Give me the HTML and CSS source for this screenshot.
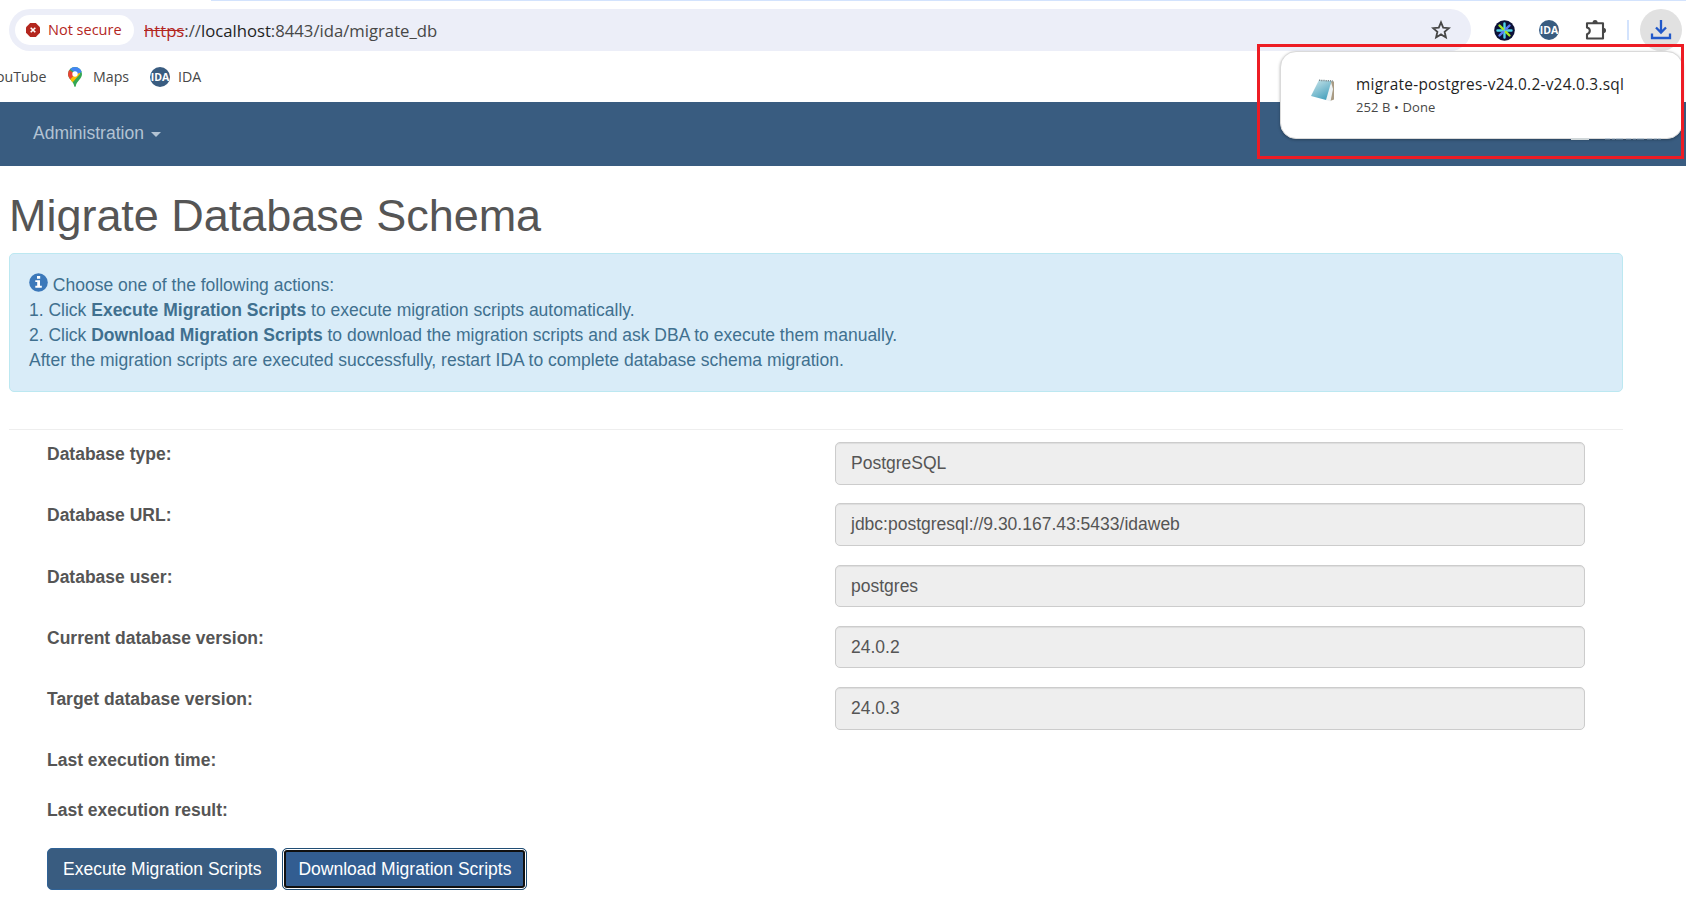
FILE: index.html
```html
<!DOCTYPE html>
<html lang="en">
<head>
<meta charset="utf-8">
<title>Migrate Database Schema</title>
<link rel="stylesheet" href="styles.css">
</head>
<body>
<header class="browser">
  <div class="tabline"></div>
  <div class="toolbar">
    <div class="omnibox">
      <div class="chip">
        <svg width="14" height="14" viewBox="0 0 14 14"><path d="M4.200 0h5.600L14 4.200v5.600L9.800 14H4.200L0 9.800V4.200z" fill="#b3261e"/><path d="M4.700 4.700l4.600 4.600M9.300 4.700L4.700 9.300" stroke="#fff" stroke-width="1.600"/></svg>
        <span class="chip-text">Not secure</span>
      </div>
      <div class="url"><span class="scheme">https</span>://<span class="host">localhost</span>:8443/ida/migrate_db</div>
      <svg class="star" width="20" height="20" viewBox="0 0 20 20"><path d="M10 2.300l2.200 5.300 5.700.5-4.300 3.700 1.300 5.600L10 14.400l-4.900 3 1.300-5.600-4.300-3.700 5.700-.5z" fill="none" stroke="#474747" stroke-width="1.800"/></svg>
    </div>
    <div class="actions">
      <svg width="21" height="21" viewBox="0 0 21 21"><circle cx="10.500" cy="10.500" r="10.300" fill="#0c1238"/><g stroke-width="2.400" stroke-linecap="round"><path d="M10.500 3.500v14M3.500 10.500h14" stroke="#4fd3e8"/><path d="M5.500 5.500l3.700 3.700M11.800 11.800l3.700 3.700" stroke="#a4e622"/><path d="M15.500 5.500l-3.700 3.700M9.200 11.800l-3.700 3.700" stroke="#5b7cf5"/></g></svg>
      <span class="ida">IDA</span>
      <svg class="puzzle" width="22" height="22" viewBox="0 0 22 22"><path d="M2 4.200h16v15.300H2v-4.300q2.800-.7 2.800-3.400T2 8.400z" fill="none" stroke="#474747" stroke-width="2.100" stroke-linejoin="round"/><path d="M7.500 4a2.600 3 0 0 1 5.200 0zM18 8.800a3 2.600 0 0 1 0 5.200z" fill="#474747"/></svg>
      <span class="separator"></span>
      <span class="download"><svg width="22" height="22" viewBox="0 0 22 22"><path d="M11 1v12M6 8.500l5 5 5-5M2 14.500v4.500h18v-4.500" fill="none" stroke="#2158c9" stroke-width="2.300"/></svg></span>
    </div>
  </div>
  <nav class="bookmarks">
    <span class="bm-youtube">ouTube</span>
    <svg class="pin" width="14" height="20" viewBox="0 0 14 20"><defs><clipPath id="pin"><path d="M7 0a7 7 0 0 0-7 7c0 5 5.500 7 6.300 12.300.2.9 1.200.9 1.400 0C8.500 14 14 12 14 7a7 7 0 0 0-7-7z"/></clipPath></defs><g clip-path="url(#pin)"><path d="M0 0h14v20H0z" fill="#34a853"/><path d="M0 2l7 5-5 6H0z" fill="#ea4335"/><path d="M1.500 13L12 2v5l-8 9z" fill="#fbbc04"/><path d="M2 0h12v5L9 7 2 2z" fill="#4285f4"/></g><circle cx="7" cy="7" r="2.700" fill="#fff"/></svg>
    <span class="bm-maps">Maps</span>
    <span class="ida">IDA</span>
    <span class="bm-ida">IDA</span>
  </nav>
</header>

<nav class="navbar"><span>Administration</span><i class="caret"></i></nav>

<main class="page">
  <h1>Migrate Database Schema</h1>
  <section class="alert">
    <svg class="info" width="19" height="19" viewBox="0 0 19 19"><circle cx="9.500" cy="9.500" r="9.300" fill="#3b78ba"/><path d="M8 3h3.200v2.700H8zM6.300 7.300H11v5.500h1.800v1.900H6.300v-1.900h1.900V9.100H6.300z" fill="#fff"/></svg> Choose one of the following actions:<br>
    1. Click <b>Execute Migration Scripts</b> to execute migration scripts automatically.<br>
    2. Click <b>Download Migration Scripts</b> to download the migration scripts and ask DBA to execute them manually.<br>
    After the migration scripts are executed successfully, restart IDA to complete database schema migration.
  </section>
  <hr>
  <div class="form">
    <div class="row"><label>Database type:</label><div class="field">PostgreSQL</div></div>
    <div class="row"><label>Database URL:</label><div class="field">jdbc:postgresql://9.30.167.43:5433/idaweb</div></div>
    <div class="row"><label>Database user:</label><div class="field">postgres</div></div>
    <div class="row"><label>Current database version:</label><div class="field">24.0.2</div></div>
    <div class="row"><label>Target database version:</label><div class="field">24.0.3</div></div>
    <div class="row short"><label>Last execution time:</label></div>
    <div class="row short"><label>Last execution result:</label></div>
    <div class="buttons"><button class="btn">Execute Migration Scripts</button><button class="btn focused">Download Migration Scripts</button></div>
  </div>
</main>

<aside class="popup">
  <svg class="file" width="24" height="23" viewBox="0 0 24 23"><defs><linearGradient id="pad" x1="0" y1="0" x2="0.600" y2="1"><stop offset="0" stop-color="#cfe8ec"/><stop offset="1" stop-color="#4ba3bf"/></linearGradient></defs><path d="M19 2l4 .5v18l-4 1.500z" fill="#a99b84"/><path d="M20 3l-5.500 18 5 1.500L22 10z" fill="#eef3f5"/><path d="M8 1l12.500 1-5.500 19L0 17z" fill="url(#pad)"/><path d="M8 1.300l14 .7" stroke="#7d8a8e" stroke-width="1.500" stroke-dasharray="1.200 1"/></svg>
  <div class="popup-text"><div class="popup-name">migrate-postgres-v24.0.2-v24.0.3.sql</div><div class="popup-meta">252 B • Done</div></div>
  <svg class="remnant" width="100" height="2" viewBox="0 0 100 2"><path d="M0 1h18" stroke="#cfd6d8" stroke-width="2"/><path d="M34 .8h56" stroke="#b3c3d3" stroke-width="1" stroke-dasharray="5 2 3 1 7 3"/></svg>
</aside>
<div class="highlight"></div>
</body>
</html>
```
FILE: styles.css
```css
* { box-sizing: border-box; }
body { margin: 0; width: 1686px; height: 921px; overflow: hidden; background: #fff; color: #555; font: 17.5px/25px "Liberation Sans", Arial, sans-serif; }
svg { display: block; flex: none; }
.browser { height: 102px; font-family: "Open Sans", "Noto Sans", sans-serif; }
.tabline { height: 1px; margin-left: 211px; background: #d3e3fd; }
.toolbar { display: flex; height: 58px; padding: 8px 3px 0 9px; }
.omnibox { display: flex; align-items: center; width: 1462px; height: 42px; padding: 0 20px 0 6px; border-radius: 21px; background: #eceef8; }
.chip { display: flex; align-items: center; gap: 8px; width: 119px; height: 30px; padding-left: 11px; border-radius: 15px; background: #fff; color: #b3261e; font-size: 14.5px; }
.chip-text { padding-bottom: 2px; white-space: nowrap; }
.url { flex: 1; margin-left: 10px; color: #474747; font-size: 16.7px; white-space: nowrap; }
.scheme { color: #b3261e; text-decoration: line-through; }
.host { color: #1f1f1f; }
.actions { display: flex; align-items: center; height: 42px; margin-left: 23px; }
.ida { display: flex; align-items: center; justify-content: center; width: 20px; height: 20px; border-radius: 50%; overflow: hidden; background: #395c80; color: #fff; font: bold 10.5px/20px "Open Sans", sans-serif; }
.actions .ida { margin-left: 24px; }
.puzzle { margin-left: 26px; }
.separator { width: 2px; height: 20px; margin-left: 20px; background: #d3e3fd; }
.download { display: grid; place-items: center; width: 42px; height: 42px; margin-left: 11px; border-radius: 50%; background: #e1e1e1; }
.bookmarks { display: flex; align-items: center; height: 36px; color: #474747; font-size: 14.2px; white-space: nowrap; }
.bookmarks span:not(.ida) { padding-bottom: 2px; }
.bm-youtube { width: 72px; margin-left: -4px; }
.bm-maps { width: 46px; margin-left: 11px; }
.bookmarks .ida { margin-left: 11px; }
.bm-ida { margin-left: 8px; }
.navbar { display: flex; align-items: center; height: 64px; padding: 0 0 2px 33px; background: #395c80; color: #b3c3d3; }
.caret { margin: 3px 0 0 7px; border: 5px solid transparent; border-top-color: #b3c3d3; border-bottom: 0; }
.page { padding: 25px 63px 0 9px; }
h1 { margin: 0 0 12px; font-size: 45px; line-height: 50px; font-weight: 400; letter-spacing: -.03px; }
.alert { height: 139px; padding: 18px 19px; border: 1px solid #bce8f1; border-radius: 5px; background: #d9ecf8; color: #40708f; }
.info { display: inline-block; position: relative; top: 1px; }
hr { height: 1px; margin: 37px 0 12px; border: 0; background: #eee; }
.form { padding: 0 38px; }
.row { display: flex; justify-content: space-between; height: 42.5px; margin-bottom: 18.75px; }
label { font-weight: 700; }
.field { width: 750px; padding: 8px 15px 0; border: 1px solid #ccc; border-radius: 5px; background: #eee; box-shadow: inset 0 1px 1px rgba(0,0,0,.075); }
.short { height: 31.25px; }
.buttons { display: flex; gap: 5px; }
.btn { height: 42px; padding: 0 15px; border: 1px solid #2f6296; border-radius: 5px; background: #395c80; color: #fff; font: inherit; white-space: nowrap; }
.focused { border-color: #204d74; background: #325d91; box-shadow: inset 0 0 0 1px #fff, inset 0 0 0 3px #101010; }
.popup { position: absolute; left: 1280px; top: 51px; display: flex; width: 403px; height: 88px; padding: 27px 0 0 30px; border: 1px solid #dadada; border-radius: 16px; background: #fff; box-shadow: 0 1px 3px rgba(0,0,0,.3); font-family: "Open Sans", sans-serif; }
.popup-text { margin: -5px 0 0 21px; white-space: nowrap; }
.popup-name { color: #1f1f1f; font-size: 15.4px; font-weight: 500; letter-spacing: .25px; line-height: 22px; }
.popup-meta { color: #474747; font-size: 13px; letter-spacing: .1px; line-height: 22px; }
.remnant { position: absolute; left: 290px; top: 86px; }
.highlight { position: absolute; left: 1257px; top: 44px; width: 427px; height: 115px; border: 3px solid #ed1c24; }
```
